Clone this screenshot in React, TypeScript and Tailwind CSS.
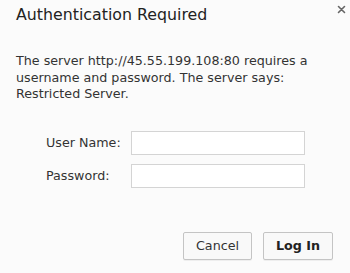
export default function App() {
  return (
    <div className="w-[350px] h-[273px] bg-[#fbfbfb] text-[#333] relative overflow-hidden" style={{ fontFamily: '"DejaVu Sans", sans-serif' }}>
      <div className="absolute left-[337px] top-[5px] text-[#666]">
        <svg width="9" height="9" viewBox="0 0 9 9">
          <path d="M1.5 1.5 L7.5 7.5 M7.5 1.5 L1.5 7.5" stroke="#666" strokeWidth="1.6" strokeLinecap="round" />
        </svg>
      </div>
      <div className="pl-4 pt-[4px]">
        <div className="text-[15.8px] leading-[22px] text-[#222]">Authentication Required</div>
        <div className="mt-[27px] text-[12.7px] leading-[16.5px] pr-[30px]">
          The server http://45.55.199.108:80 requires a username and password. The server says: Restricted Server.
        </div>
      </div>
      <div className="mt-[28px] ml-[46px] grid grid-cols-[77px_174px] gap-x-[8px] gap-y-[9px] items-center text-[12.7px]">
        <label>User Name:</label>
        <div className="h-[24px] bg-white border border-[#d4d4d4]"></div>
        <label>Password:</label>
        <div className="h-[24px] bg-white border border-[#d4d4d4]"></div>
      </div>
      <div className="mt-[44px] pr-[17px] flex justify-end gap-[11px] text-[12.7px]">
        <button className="w-[69px] h-[28px] border border-[#c4c4c4] rounded-[2px] bg-[#f9f9f9] text-[#333] shadow-[0_1px_0_rgba(0,0,0,0.05)]">Cancel</button>
        <button className="w-[70px] h-[28px] border border-[#c4c4c4] rounded-[2px] bg-[#f9f9f9] text-[#222] font-bold shadow-[0_1px_0_rgba(0,0,0,0.05)]">Log In</button>
      </div>
    </div>
  );
}
